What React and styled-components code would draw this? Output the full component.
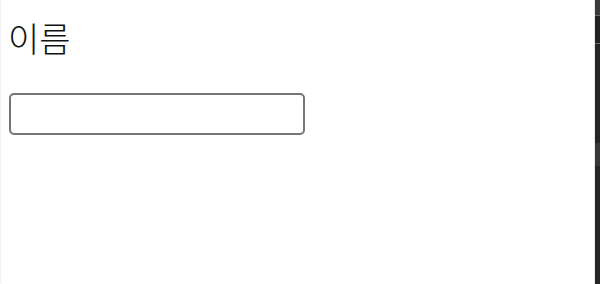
import styled, { createGlobalStyle } from "styled-components";

const Global = createGlobalStyle`
  html, body {
    margin: 0;
    padding: 0;
    background: #ffffff;
  }
  #root {
    height: 284px;
  }
`;

const Page = styled.div`
  display: flex;
  height: 284px;
  width: 600px;
  background: #ffffff;
`;

const Panel = styled.div`
  flex: 1;
  display: flex;
  flex-direction: column;
  align-items: flex-start;
  padding: 17px 0 0 8px;
  border-radius: 3px 0 0 3px;
  box-shadow: inset 1px 0 0 #f0f0f0;
`;

const Label = styled.label`
  font-family: "Noto Sans CJK KR", "Noto Sans", sans-serif;
  font-size: 34px;
  font-weight: 300;
  line-height: 42px;
  color: #111111;
`;

const TextInput = styled.input`
  margin-top: 34px;
  margin-left: 1px;
  width: 296px;
  height: 42px;
  box-sizing: border-box;
  border: 2px solid #767676;
  border-radius: 5px;
  background: #ffffff;
  outline: none;
  font-size: 16px;
  padding: 0 8px;
`;

const Rail = styled.div`
  width: 5px;
  display: flex;
  flex-direction: column;
  background: #252525;
  border-left: 1px solid #e8e8e8;
`;

const RailPart = styled.div`
  height: ${(p) => p.$h}px;
  background: ${(p) => p.$bg};
  border-bottom: ${(p) => (p.$line ? "1px solid #6a6a6a" : "none")};
`;

export default function App() {
  return (
    <Page>
      <Global />
      <Panel>
        <Label htmlFor="name">이름</Label>
        <TextInput id="name" type="text" />
      </Panel>
      <Rail>
        <RailPart $h={15} $bg="#3a3a3a" $line />
        <RailPart $h={27} $bg="#222222" $line />
        <RailPart $h={99} $bg="#252525" />
        <RailPart $h={24} $bg="#383838" />
        <RailPart $h={118} $bg="#252525" />
      </Rail>
    </Page>
  );
}
